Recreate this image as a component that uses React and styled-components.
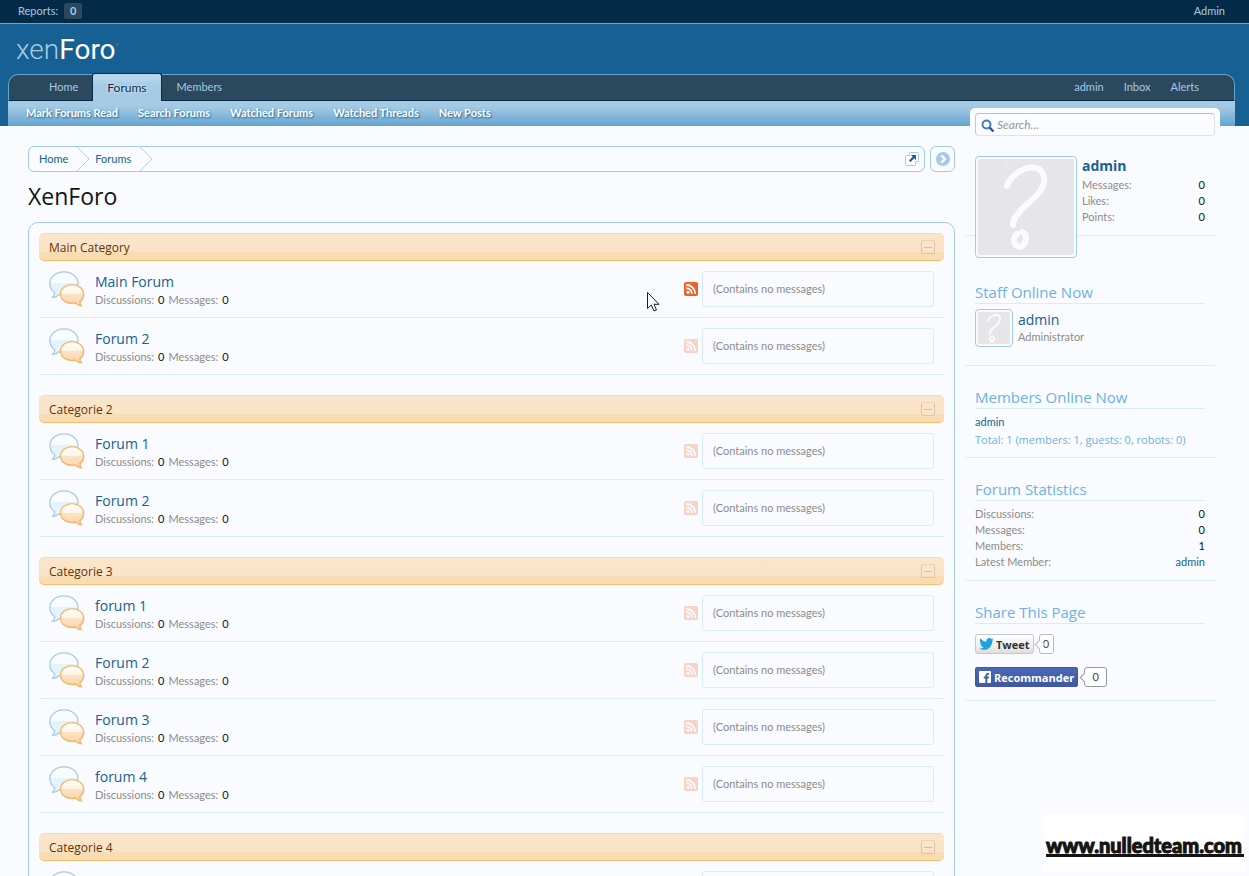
import React, { useState } from "react";
import styled, { createGlobalStyle } from "styled-components";

const GlobalStyle = createGlobalStyle`
  * {
    box-sizing: border-box;
  }
  body {
    margin: 0;
    background: #f9fbff;
    color: #141414;
    font-family: Lato, "Open Sans", sans-serif;
    font-size: 11px;
    line-height: 16px;
  }
  a {
    color: #176093;
    text-decoration: none;
  }
  h1, h2, h3, ol, ul, dl, dd, p {
    margin: 0;
    padding: 0;
    font-weight: 400;
    list-style: none;
  }
  h1, h2, h3 {
    font-family: "Open Sans", sans-serif;
  }
`;

const Page = styled.div`
  position: relative;
  height: 100vh;
  overflow: hidden;
`;

const ModeratorBar = styled.div`
  display: flex;
  justify-content: space-between;
  align-items: center;
  height: 24px;
  padding: 0 24px 2px 18px;
  background: #032a46;
  border-bottom: 1px solid #65a5d1;
  a {
    color: #a5cae4;
  }
`;

const ReportCount = styled.span`
  display: inline-block;
  margin-left: 3px;
  padding: 0 6px;
  border-radius: 2px;
  background: #2b485c;
  font-weight: 700;
`;

const Header = styled.header`
  padding: 0 14px 0 8px;
  background: #176093;
`;

const Logo = styled.a`
  display: block;
  height: 50px;
  padding-left: 8px;
  font-family: Roboto, sans-serif;
  font-size: 28px;
  font-weight: 300;
  line-height: 52px;
  && {
    color: #a5cae4;
  }
  b {
    color: #fff;
    font-weight: 400;
  }
  sup {
    font-size: 5px;
    line-height: 5px;
    vertical-align: 12px;
  }
`;

const NavTabs = styled.nav`
  display: flex;
  height: 27px;
  padding: 0 25px;
  border: 1px solid #65a5d1;
  border-bottom-color: #032a46;
  border-radius: 10px 10px 0 0;
  background: #2b485c;
`;

const NavTab = styled.a`
  height: 25px;
  padding: 0 14px 0 15px;
  line-height: 24px;
  && {
    color: #a5cae4;
  }
`;

const SelectedTab = styled.a`
  height: 28px;
  margin-top: -2px;
  padding: 0 14px;
  border: 1px solid #032a46;
  border-bottom: none;
  border-radius: 3px 3px 0 0;
  background: linear-gradient(#b9d6ea 0, #b9d6ea 4px, #a5cae4 12px);
  font-size: 12px;
  line-height: 28px;
  text-shadow: 0 0 3px #fff;
  && {
    color: #032a46;
  }
`;

const VisitorTabs = styled.div`
  display: flex;
  margin-left: auto;
  ${NavTab} {
    padding: 0 10px;
  }
`;

const SubNav = styled.div`
  display: flex;
  gap: 20px;
  height: 25px;
  padding-left: 18px;
  background: linear-gradient(#a5cae4 20%, #65a5d1);
  line-height: 24px;
  a {
    color: #fff;
    font-weight: 700;
    text-shadow: 1px 1px 2px #176093;
  }
`;

const SearchBar = styled.form`
  position: absolute;
  top: 108px;
  right: 29px;
  width: 250px;
  padding: 5px 5px 0;
  border-radius: 5px 5px 0 0;
  background: #f9fbff;
  svg {
    position: absolute;
    top: 11px;
    left: 11px;
  }
`;

const SearchInput = styled.input`
  display: block;
  width: 100%;
  height: 23px;
  padding: 0 0 0 21px;
  border: 1px solid #e1e1e4;
  border-top-color: #c0c0c4;
  border-left-color: #c8c8cc;
  border-radius: 4px;
  background: #fbfcff;
  font: italic 12px Lato, sans-serif;
  &::placeholder {
    color: #969696;
    opacity: 1;
  }
`;

const Content = styled.div`
  display: flex;
  align-items: flex-start;
  gap: 10px;
  margin: 0 14px 0 8px;
  padding: 20px 20px 0;
`;

const Main = styled.main`
  flex: 1;
  min-width: 0;
`;

const BreadcrumbRow = styled.div`
  display: flex;
  gap: 5px;
`;

const Breadcrumb = styled.nav`
  display: flex;
  flex: 1;
  height: 26px;
  border: 1px solid #a5cae4;
  border-radius: 6px;
  overflow: hidden;
  line-height: 24px;
`;

const Crumb = styled.a`
  display: flex;
  align-items: center;
  gap: 9px;
  padding-left: ${(props) => (props.$first ? "10px" : "5px")};
`;

const OpenButton = styled.button`
  display: flex;
  align-items: center;
  margin-left: auto;
  padding: 0 5px;
  border: none;
  background: none;
`;

const JumpButton = styled.button`
  display: flex;
  align-items: center;
  justify-content: center;
  width: 25px;
  height: 26px;
  padding: 0;
  border: 1px solid #a5cae4;
  border-radius: 6px;
  background: none;
`;

const PageTitle = styled.h1`
  margin: 9px 0 10px;
  font-size: 23px;
  line-height: 31px;
`;

const ForumList = styled.ol`
  padding: 10px;
  border: 1px solid #a5cae4;
  border-radius: 10px;
`;

const Category = styled.li`
  margin-bottom: 20px;
`;

const CategoryStrip = styled.div`
  display: flex;
  align-items: center;
  justify-content: space-between;
  height: 28px;
  padding: 0 9px 0 10px;
  border-top: 1px solid #f9d9b0;
  border-bottom: 1px solid #f9bc6d;
  border-radius: 5px;
  background: linear-gradient(#fbe5cb 0, #fae3c8 18px, #f8dcb3 18px);
  h2 {
    padding-top: 1px;
    font-size: 12px;
  }
  a {
    color: #663300;
  }
`;

const CollapseButton = styled.button`
  display: flex;
  align-items: center;
  justify-content: center;
  width: 14px;
  height: 14px;
  padding: 0;
  border: 1px solid #dcc5b0;
  border-top-color: #f3d3ae;
  border-radius: 2px;
  background: none;
  &::before {
    content: "";
    width: 8px;
    height: 1px;
    background: #d3bba8;
  }
`;

const ForumRow = styled.li`
  display: flex;
  align-items: center;
  height: 57px;
  padding: 0 10px;
  border-bottom: 1px solid #d7edfc;
`;

const ForumText = styled.div`
  flex: 1;
  padding: 2px 0 0 10px;
  h3 {
    font-size: 14px;
    line-height: 20px;
  }
`;

const ForumStats = styled.dl`
  display: flex;
  gap: 4px;
  dt {
    color: #8c8c8c;
  }
`;

const FeedLink = styled.a`
  display: flex;
  margin-right: 4px;
  opacity: ${(props) => (props.$active ? 1 : 0.25)};
`;

const LastPost = styled.div`
  width: 232px;
  height: 36px;
  padding-left: 10px;
  border: 1px solid #d7edfc;
  border-radius: 3px;
  color: #8c8c8c;
  line-height: 34px;
`;

const Sidebar = styled.aside`
  width: 250px;
`;

const VisitorPanel = styled.div`
  display: flex;
  gap: 5px;
  height: 90px;
  margin-bottom: 25px;
  padding: 10px 10px 0;
  border-bottom: 1px solid #d7edfc;
`;

const Avatar = styled.a`
  display: block;
  flex: none;
  position: relative;
  width: ${(props) => props.$size}px;
  height: ${(props) => props.$size}px;
  padding: 2px;
  border: 1px solid #a5cae4;
  border-radius: 4px;
  background: #f9fbff;
  svg {
    display: block;
    width: 100%;
    height: 100%;
    border-radius: 2px;
  }
`;

const VisitorText = styled.div`
  flex: 1;
  h2 {
    margin-bottom: 1px;
    font-size: 14px;
    font-weight: 700;
    line-height: 20px;
  }
`;

const Pair = styled.dl`
  display: flex;
  justify-content: space-between;
  dt {
    color: #8c8c8c;
  }
`;

const Section = styled.section`
  padding: 21px 10px ${(props) => props.$bottom}px;
  border-bottom: 1px solid #d7edfc;
`;

const SectionTitle = styled.h3`
  margin-bottom: 5px;
  padding-bottom: 1px;
  border-bottom: 1px solid #d7edfc;
  color: #6cb2e4;
  font-size: 15px;
  line-height: 20px;
`;

const StaffMember = styled.div`
  display: flex;
  gap: 5px;
  padding-bottom: 1px;
  color: #8c8c8c;
  a {
    font: 14px/18px "Open Sans", sans-serif;
  }
`;

const StaffText = styled.div`
  display: flex;
  flex-direction: column;
  padding-top: 2px;
`;

const OnlineTotal = styled.p`
  margin-top: 2px;
  padding-bottom: 1px;
  color: #6cb2e4;
  font-family: "Open Sans", sans-serif;
`;

const ShareRow = styled.div`
  display: flex;
  gap: 5px;
  padding-top: 5px;
  & + & {
    padding-top: 13px;
    gap: 6px;
  }
`;

const ShareButton = styled.button`
  display: flex;
  align-items: center;
  height: 20px;
  font: 700 11px "Open Sans", sans-serif;
`;

const TweetButton = styled(ShareButton)`
  gap: 2px;
  padding: 0 3px;
  border: 1px solid #c8c8c8;
  border-radius: 3px;
  background: linear-gradient(#fff, #f3f3f3 50%, #dedede);
  color: #333;
`;

const FacebookButton = styled(ShareButton)`
  gap: 3px;
  padding: 0 3px;
  border: 1px solid #4059a5;
  border-radius: 2px;
  background: linear-gradient(#4a67b5, #4058a5);
  color: #fff;
`;

const CountBubble = styled.span`
  position: relative;
  min-width: ${(props) => (props.$wide ? "23px" : "15px")};
  height: 20px;
  border: 1px solid ${(props) => (props.$wide ? "#9197a9" : "#bbb")};
  border-radius: 3px;
  background: #fff;
  color: #444;
  line-height: 18px;
  text-align: center;
  &::before {
    content: "";
    position: absolute;
    top: 6px;
    left: -4px;
    width: 6px;
    height: 6px;
    border: solid ${(props) => (props.$wide ? "#9197a9" : "#bbb")};
    border-width: 0 0 1px 1px;
    background: #fff;
    transform: rotate(45deg);
  }
`;

const Watermark = styled.div`
  position: fixed;
  right: 5px;
  bottom: 4px;
  width: 200px;
  height: 58px;
  padding: 19px 0 0 2px;
  background: #fff;
  span {
    display: block;
    height: 24px;
    border-bottom: 3px solid #141414;
    color: #141414;
    font: 900 20px/24px Lato, sans-serif;
    white-space: nowrap;
    -webkit-text-stroke: 1px #141414;
  }
`;

const Pointer = styled.svg`
  position: absolute;
  top: 292px;
  left: 647px;
`;

const CrumbArrow = () => (
  <svg width="13" height="24" viewBox="0 0 13 24" fill="none">
    <path d="M0 0 L12 12 L0 24" stroke="#b9cdec" />
  </svg>
);

const SearchIcon = () => (
  <svg width="14" height="14" viewBox="0 0 14 14" fill="none">
    <circle cx="5.5" cy="5.5" r="4" stroke="#3c80c4" strokeWidth="2" />
    <path d="M8.5 8.5 L12.5 12.5" stroke="#3a4f9c" strokeWidth="2.4" />
  </svg>
);

const OpenIcon = () => (
  <svg width="14" height="14" viewBox="0 0 14 14" fill="none">
    <path
      d="M4.5 3.5 V1.5 Q4.5 .5 5.5 .5 H12.5 Q13.5 .5 13.5 1.5 V8.5 Q13.5 9.5 12.5 9.5 H10.5 V12.5 Q10.5 13.5 9.5 13.5 H1.5 Q.5 13.5 .5 12.5 V4.5 Q.5 3.5 1.5 3.5 Z"
      stroke="#a5cae4"
    />
    <path d="M6 3 H11 V8 L9.3 6.3 L5.5 10 L4 8.5 L7.7 4.7 Z" fill="#176093" />
  </svg>
);

const JumpIcon = () => (
  <svg width="14" height="14" viewBox="0 0 14 14" fill="none">
    <circle cx="7" cy="7" r="7" fill="#a5cae4" />
    <path d="M5.3 3.3 L9 7 L5.3 10.7" stroke="#f9fbff" strokeWidth="2.4" />
  </svg>
);

const BubblesIcon = () => (
  <svg width="36" height="36" viewBox="0 0 36 36">
    <defs>
      <linearGradient id="blueBubble" x1="0" y1="0" x2="0" y2="1">
        <stop offset="0" stopColor="#f9fcff" />
        <stop offset=".42" stopColor="#f9fcff" />
        <stop offset=".43" stopColor="#e4f2fb" />
        <stop offset="1" stopColor="#e4f4fd" />
      </linearGradient>
      <linearGradient id="orangeBubble" x1="0" y1="0" x2="0" y2="1">
        <stop offset="0" stopColor="#fff" />
        <stop offset=".44" stopColor="#fdf3e4" />
        <stop offset=".45" stopColor="#fbe3c6" />
        <stop offset="1" stopColor="#fbd5a4" />
      </linearGradient>
    </defs>
    <path
      d="M15 .8 C23 .8 29 5.8 29 12.5 C29 19 23 24.5 15 24.5 C13 24.5 11.5 24.3 10 23.8 C8.5 25.2 6 26.5 3.5 26.2 C5 25 5.8 23.5 5.8 21.8 C2.5 19.6 .8 16.3 .8 12.5 C.8 5.8 7 .8 15 .8 Z"
      fill="url(#blueBubble)"
      stroke="#a9cbe6"
      strokeWidth="1.3"
    />
    <path
      d="M24 14.6 C30.3 14.6 35.6 18.6 35.6 23.9 C35.6 27.2 33.9 29.7 31.8 31.3 C31.9 33 32.5 34.5 33.5 35.6 C31 35.5 28.9 34.4 27.5 33 C19 34.5 12.4 30.3 12.4 23.9 C12.4 18.6 17.7 14.6 24 14.6 Z"
      fill="#bfbfc4"
      opacity=".6"
    />
    <path
      d="M23 13.7 C29.5 13.7 34.5 17.7 34.5 23 C34.5 26.3 33 28.8 30.8 30.4 C30.9 32.2 31.4 33.7 32.3 34.7 C30 34.5 28 33.5 26.6 32 C18 33.5 11.5 29.3 11.5 23 C11.5 17.7 16.5 13.7 23 13.7 Z"
      fill="url(#orangeBubble)"
      stroke="#f5b868"
      strokeWidth="1.3"
    />
  </svg>
);

const FeedIcon = () => (
  <svg width="14" height="14" viewBox="0 0 14 14" fill="none">
    <rect width="14" height="14" rx="2" fill="#e8602c" />
    <path d="M1 1 H9 L1 9 Z" fill="#f28a1e" opacity=".6" />
    <circle cx="4" cy="10.3" r="1.5" fill="#fff" />
    <path
      d="M2.5 6.3 A5.2 5.2 0 0 1 7.9 11.7 M2.5 3 A8.6 8.6 0 0 1 11.2 11.7"
      stroke="#fff"
      strokeWidth="1.8"
    />
  </svg>
);

const QuestionMark = () => (
  <svg viewBox="0 0 96 96" fill="none" preserveAspectRatio="none">
    <rect width="96" height="96" fill="#e6e6e8" />
    <path
      d="M29 27 C32 18 44 8 55 8.5 C65 9 69 19 64 29 C59 39 50 43 43 51 C38 57 35 60 35 66"
      stroke="#f9fbff"
      strokeWidth="6"
      strokeLinecap="round"
    />
    <path
      d="M44 73 C50 75 49 84 44 87 C40 89 35 85 36 80 C36 78 38 76 39 75"
      stroke="#f9fbff"
      strokeWidth="6"
      strokeLinecap="round"
    />
    <path d="M27 3 L31 10" stroke="#f0f1f4" strokeWidth="1" />
  </svg>
);

const BirdIcon = () => (
  <svg width="15" height="12" viewBox="0 0 24 20">
    <path
      fill="#1fa2e0"
      d="M24 2.4a10 10 0 0 1-2.8.8A5 5 0 0 0 23.3.5a10 10 0 0 1-3.1 1.2 4.9 4.9 0 0 0-8.4 4.5A14 14 0 0 1 1.7 1a4.9 4.9 0 0 0 1.5 6.6A4.9 4.9 0 0 1 1 7v.1a4.9 4.9 0 0 0 3.9 4.8 5 5 0 0 1-2.2.1 4.9 4.9 0 0 0 4.6 3.4A9.9 9.9 0 0 1 0 17.5 14 14 0 0 0 7.5 19.7c9.1 0 14-7.5 14-14v-.7A10 10 0 0 0 24 2.4Z"
    />
  </svg>
);

const FacebookIcon = () => (
  <svg width="12" height="12" viewBox="0 0 12 12">
    <rect width="12" height="12" rx="1" fill="#fff" />
    <path
      d="M6.3 12 V7.5 H4.8 V5.6 H6.3 V4.5 Q6.3 2 8.7 2 H10.2 V3.8 H9.2 Q8.3 3.8 8.3 4.6 V5.6 H10.2 L9.9 7.5 H8.3 V12 Z"
      fill="#4560ad"
    />
  </svg>
);

const categories = [
  { title: "Main Category", forums: ["Main Forum", "Forum 2"] },
  { title: "Categorie 2", forums: ["Forum 1", "Forum 2"] },
  { title: "Categorie 3", forums: ["forum 1", "Forum 2", "Forum 3", "forum 4"] },
  { title: "Categorie 4", forums: ["Forum 1"] },
];

const subLinks = [
  "Mark Forums Read",
  "Search Forums",
  "Watched Forums",
  "Watched Threads",
  "New Posts",
];

const StatPair = ({ label, children }) => (
  <Pair>
    <dt>{label}:</dt>
    <dd>{children}</dd>
  </Pair>
);

const Forum = ({ title, active }) => (
  <ForumRow>
    <BubblesIcon />
    <ForumText>
      <h3>
        <a href="#forum">{title}</a>
      </h3>
      <ForumStats>
        <dt>Discussions:</dt>
        <dd>0</dd>
        <dt>Messages:</dt>
        <dd>0</dd>
      </ForumStats>
    </ForumText>
    <FeedLink href="#rss" aria-label="RSS" $active={active}>
      <FeedIcon />
    </FeedLink>
    <LastPost>(Contains no messages)</LastPost>
  </ForumRow>
);

const App = () => {
  const [closed, setClosed] = useState([]);

  const toggle = (title) =>
    setClosed((list) =>
      list.includes(title) ? list.filter((t) => t !== title) : [...list, title]
    );

  return (
    <Page>
      <GlobalStyle />
      <ModeratorBar>
        <a href="#reports">
          Reports: <ReportCount>0</ReportCount>
        </a>
        <a href="#admin">Admin</a>
      </ModeratorBar>

      <Header>
        <Logo href="#home">
          xen<b>Foro</b>
          <sup>™</sup>
        </Logo>
        <NavTabs>
          <NavTab href="#home">Home</NavTab>
          <SelectedTab href="#forums">Forums</SelectedTab>
          <NavTab href="#members">Members</NavTab>
          <VisitorTabs>
            <NavTab href="#account">admin</NavTab>
            <NavTab href="#inbox">Inbox</NavTab>
            <NavTab href="#alerts">Alerts</NavTab>
          </VisitorTabs>
        </NavTabs>
        <SubNav>
          {subLinks.map((link) => (
            <a href="#sub" key={link}>
              {link}
            </a>
          ))}
        </SubNav>
      </Header>

      <SearchBar>
        <SearchInput type="search" placeholder="Search..." aria-label="Search" />
        <SearchIcon />
      </SearchBar>

      <Content>
        <Main>
          <BreadcrumbRow>
            <Breadcrumb>
              <Crumb href="#home" $first>
                Home
                <CrumbArrow />
              </Crumb>
              <Crumb href="#forums">
                Forums
                <CrumbArrow />
              </Crumb>
              <OpenButton aria-label="Open quick navigation">
                <OpenIcon />
              </OpenButton>
            </Breadcrumb>
            <JumpButton aria-label="Toggle sidebar">
              <JumpIcon />
            </JumpButton>
          </BreadcrumbRow>

          <PageTitle>XenForo</PageTitle>

          <ForumList>
            {categories.map(({ title, forums }, index) => (
              <Category key={title}>
                <CategoryStrip>
                  <h2>
                    <a href="#category">{title}</a>
                  </h2>
                  <CollapseButton
                    aria-label={`Collapse ${title}`}
                    onClick={() => toggle(title)}
                  />
                </CategoryStrip>
                {!closed.includes(title) && (
                  <ol>
                    {forums.map((forum, i) => (
                      <Forum
                        key={forum}
                        title={forum}
                        active={index === 0 && i === 0}
                      />
                    ))}
                  </ol>
                )}
              </Category>
            ))}
          </ForumList>
        </Main>

        <Sidebar>
          <VisitorPanel>
            <Avatar href="#account" $size={102} aria-label="admin">
              <QuestionMark />
            </Avatar>
            <VisitorText>
              <h2>
                <a href="#account">admin</a>
              </h2>
              <StatPair label="Messages">0</StatPair>
              <StatPair label="Likes">0</StatPair>
              <StatPair label="Points">0</StatPair>
            </VisitorText>
          </VisitorPanel>

          <Section $bottom={17}>
            <SectionTitle>Staff Online Now</SectionTitle>
            <StaffMember>
              <Avatar href="#staff" $size={38} aria-label="admin">
                <QuestionMark />
              </Avatar>
              <StaffText>
                <a href="#staff">admin</a>
                <p>Administrator</p>
              </StaffText>
            </StaffMember>
          </Section>

          <Section $bottom={8}>
            <SectionTitle>Members Online Now</SectionTitle>
            <a href="#staff">admin</a>
            <OnlineTotal>Total: 1 (members: 1, guests: 0, robots: 0)</OnlineTotal>
          </Section>

          <Section $bottom={10}>
            <SectionTitle>Forum Statistics</SectionTitle>
            <StatPair label="Discussions">0</StatPair>
            <StatPair label="Messages">0</StatPair>
            <StatPair label="Members">1</StatPair>
            <StatPair label="Latest Member">
              <a href="#staff">admin</a>
            </StatPair>
          </Section>

          <Section $bottom={13}>
            <SectionTitle>Share This Page</SectionTitle>
            <ShareRow>
              <TweetButton>
                <BirdIcon />
                Tweet
              </TweetButton>
              <CountBubble>0</CountBubble>
            </ShareRow>
            <ShareRow>
              <FacebookButton>
                <FacebookIcon />
                Recommander
              </FacebookButton>
              <CountBubble $wide>0</CountBubble>
            </ShareRow>
          </Section>
        </Sidebar>
      </Content>

      <Watermark>
        <span>www.nulledteam.com</span>
      </Watermark>

      <Pointer width="13" height="20" viewBox="0 0 13 20">
        <path
          d="M.5 .5 V16.5 L4.3 13 L7 19 L9.5 18 L7 12.3 H12 Z"
          fill="#f9fbff"
          stroke="#1c1c2c"
        />
      </Pointer>
    </Page>
  );
};

export default App;
